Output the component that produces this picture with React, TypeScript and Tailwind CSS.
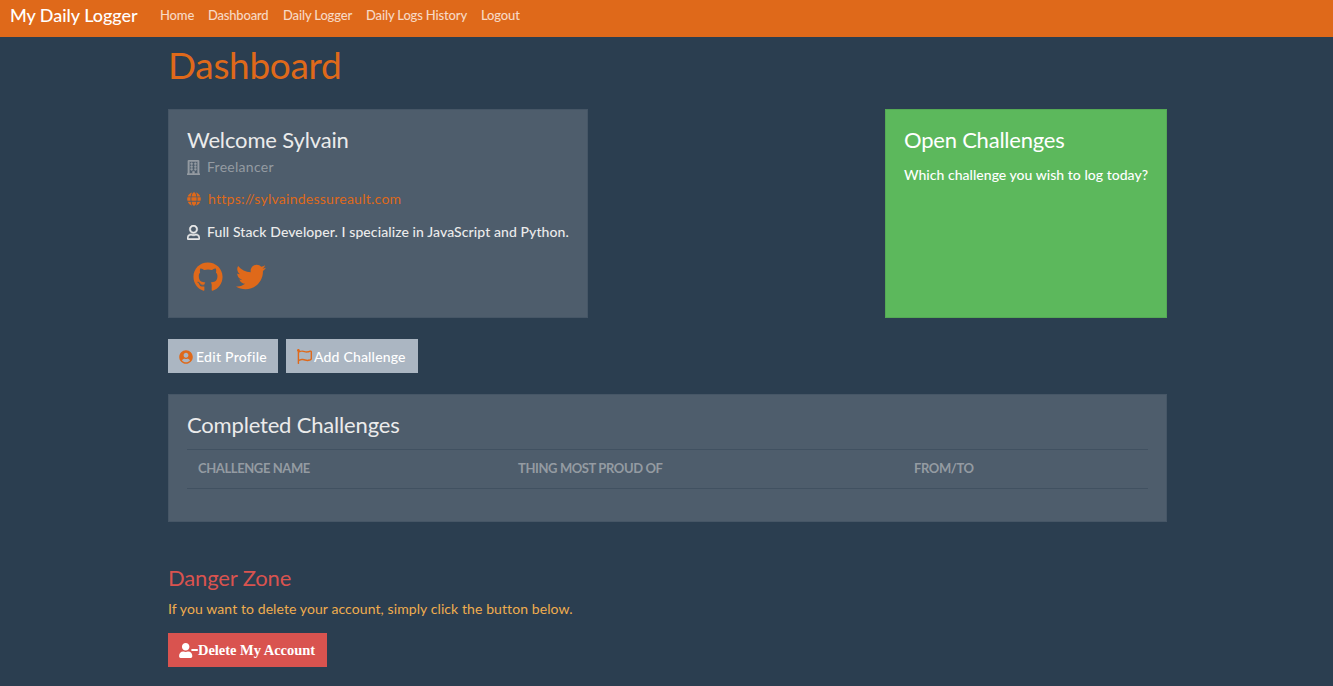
import { FaUserCircle, FaGithub, FaTwitter, FaGlobe, FaRegBuilding, FaRegUser, FaRegFlag, FaUserMinus } from "react-icons/fa";

const links = [
  { label: "Home", cls: "w-[48px] tracking-[-0.15px]" },
  { label: "Dashboard", cls: "w-[75px] tracking-[-0.2px]" },
  { label: "Daily Logger", cls: "w-[83px] tracking-[-0.15px]" },
  { label: "Daily Logs History", cls: "w-[115px] tracking-[-0.15px]" },
  { label: "Logout", cls: "w-[60px] tracking-[-0.15px]" },
];

function Navbar() {
  return (
    <nav className="flex h-[37px] items-start bg-[#df691a] pl-[10px]">
      <a className="w-[150px] whitespace-nowrap pt-px text-[18px] leading-[28px] tracking-[-0.05px] text-white">My Daily Logger</a>
      {links.map((l) => (
        <a key={l.label} className={"whitespace-nowrap pt-[5px] text-[13px] leading-[20px] text-white/75 " + l.cls}>{l.label}</a>
      ))}
    </nav>
  );
}

function ProfileCard() {
  return (
    <section className="h-[209px] w-[420px] border border-[#465666] bg-[#4e5d6c] px-[18px] pt-[17px]">
      <h2 className="text-[22px] leading-[25px] font-normal tracking-[-0.15px]">Welcome Sylvain</h2>
      <p className="mt-[4px] flex h-[22px] items-center whitespace-nowrap font-normal tracking-[0.28px] text-[#949ba2]">
        <FaRegBuilding className="mr-[7px] h-[15px] w-[13px] shrink-0" stroke="currentColor" strokeWidth={18} />Freelancer
      </p>
      <p className="mt-[10px] flex h-[22px] items-center whitespace-nowrap font-normal tracking-[0.26px] text-[#df691a]">
        <FaGlobe className="mr-[7px] size-[14px] shrink-0" />https://sylvaindessureault.com
      </p>
      <p className="mt-[11px] flex h-[22px] items-center whitespace-nowrap tracking-[0.09px]">
        <FaRegUser className="mr-[7px] h-[15px] w-[13px] shrink-0" stroke="currentColor" strokeWidth={18} />Full Stack Developer. I specialize in JavaScript and Python.
      </p>
      <div className="mt-[19px] flex gap-[13px] pl-[6px] text-[#df691a]">
        <FaGithub className="size-[30px]" />
        <FaTwitter className="size-[30px]" />
      </div>
    </section>
  );
}

export default function App() {
  return (
    <div className="h-[686px] overflow-hidden bg-[#2b3e50] font-[Lato,sans-serif] text-[14px] leading-[22px] font-medium text-[#ebebeb]">
      <Navbar />
      <main className="ml-[168px] w-[999px]">
        <h1 className="h-[72px] pt-[5px] text-[37px] leading-[45px] font-normal tracking-[-0.32px] text-[#df691a]">Dashboard</h1>
        <div className="flex justify-between">
          <ProfileCard />
          <section className="h-[209px] w-[282px] border border-[#55a955] bg-[#5cb85c] px-[18px] pt-[17px] text-white">
            <h2 className="text-[22px] leading-[25px] font-normal tracking-[-0.22px]">Open Challenges</h2>
            <p className="mt-[12px] whitespace-nowrap tracking-[0.03px]">Which challenge you wish to log today?</p>
          </section>
        </div>
        <div className="mt-[21px] flex gap-[8px] text-white">
          <button className="flex h-[34px] w-[110px] items-center whitespace-nowrap bg-[#abb6c2] pl-[11px] pt-px tracking-[0.27px]">
            <FaUserCircle className="mr-[3px] size-[14px] shrink-0 text-[#df691a]" />Edit Profile
          </button>
          <button className="flex h-[34px] w-[132px] items-center whitespace-nowrap bg-[#abb6c2] pl-[11px] pt-px tracking-[0.18px]">
            <FaRegFlag className="mr-[2px] size-[15px] shrink-0 text-[#df691a]" />Add Challenge
          </button>
        </div>
        <section className="mt-[21px] h-[128px] border border-[#465666] bg-[#4e5d6c] px-[18px] pt-[17px]">
          <h2 className="text-[22px] leading-[25px] font-normal tracking-[-0.18px]">Completed Challenges</h2>
          <div className="mt-[12px] grid h-[40px] grid-cols-[320px_396px_1fr] items-center border-y border-[#415161] pb-[2px] pl-[11px] text-[13px] font-bold tracking-[-0.4px] text-[#949ba2]">
            <span>CHALLENGE NAME</span>
            <span>THING MOST PROUD OF</span>
            <span>FROM/TO</span>
          </div>
        </section>
        <section className="mt-[43px]">
          <h2 className="text-[22px] leading-[25px] font-normal tracking-[-0.15px] text-[#d9534f]">Danger Zone</h2>
          <p className="mt-[8px] font-normal tracking-[0.09px] text-[#f0ad4e]">If you want to delete your account, simply click the button below.</p>
          <button className="mt-[13px] flex h-[34px] w-[159px] items-center whitespace-nowrap bg-[#d9534f] pl-[11px] font-['Liberation_Serif',serif] text-[14.5px] font-bold tracking-[-0.03px] text-white">
            <FaUserMinus className="h-[15px] w-[19px] shrink-0" />Delete My Account
          </button>
        </section>
      </main>
    </div>
  );
}
